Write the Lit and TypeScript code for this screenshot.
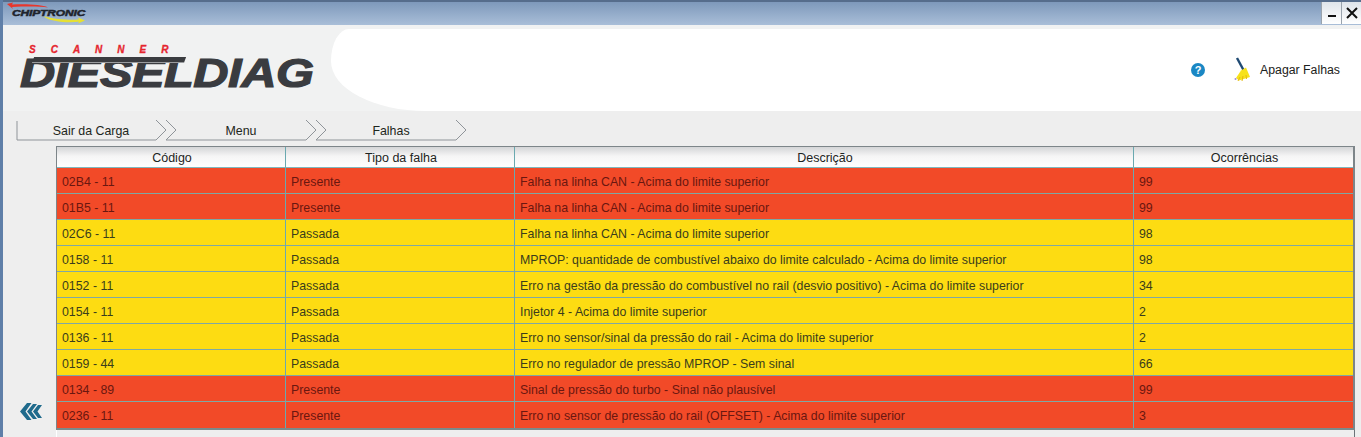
import { LitElement, html, css, svg } from "lit";
import { customElement } from "lit/decorators.js";

type Row = { code: string; type: "Presente" | "Passada"; desc: string; n: string };

const ROWS: Row[] = [
  { code: "02B4 - 11", type: "Presente", desc: "Falha na linha CAN - Acima do limite superior", n: "99" },
  { code: "01B5 - 11", type: "Presente", desc: "Falha na linha CAN - Acima do limite superior", n: "99" },
  { code: "02C6 - 11", type: "Passada", desc: "Falha na linha CAN - Acima do limite superior", n: "98" },
  { code: "0158 - 11", type: "Passada", desc: "MPROP: quantidade de combustível abaixo do limite calculado - Acima do limite superior", n: "98" },
  { code: "0152 - 11", type: "Passada", desc: "Erro na gestão da pressão do combustível no rail (desvio positivo) - Acima do limite superior", n: "34" },
  { code: "0154 - 11", type: "Passada", desc: "Injetor 4 - Acima do limite superior", n: "2" },
  { code: "0136 - 11", type: "Passada", desc: "Erro no sensor/sinal da pressão do rail - Acima do limite superior", n: "2" },
  { code: "0159 - 44", type: "Passada", desc: "Erro no regulador de pressão MPROP - Sem sinal", n: "66" },
  { code: "0134 - 89", type: "Presente", desc: "Sinal de pressão do turbo - Sinal não plausível", n: "99" },
  { code: "0236 - 11", type: "Presente", desc: "Erro no sensor de pressão do rail (OFFSET) - Acima do limite superior", n: "3" },
];

const crumbShape = (first: boolean, last: boolean) => svg`
  ${first ? svg`<path d="M1 1V20H140" />` : svg`<path d="M0 20H140" />`}
  <path d="M140 20L150 10L140 0" />
  ${last ? "" : svg`<path d="M150 20L160 10L150 0" />`}
`;

@customElement("app-root")
export class AppRoot extends LitElement {
  static styles = css`
    :host {
      display: block;
      width: 1361px;
      height: 437px;
      overflow: hidden;
      font-family: "Liberation Sans", Arial, sans-serif;
      background: #eeeeee;
    }
    .frame {
      height: 437px;
      display: flex;
      flex-direction: column;
      border-left: 3px solid #5f7fa8;
      box-sizing: border-box;
      overflow: hidden;
    }
    .titlebar {
      height: 25px;
      flex: none;
      display: flex;
      justify-content: space-between;
      margin-left: -3px;
      box-sizing: border-box;
      border-top: 2px solid #566d8c;
      background: linear-gradient(#7e99bb, #a9bed8);
    }
    .chip {
      position: relative;
      width: 90px;
      height: 23px;
      margin-left: 6px;
    }
    .chip svg {
      position: absolute;
      inset: 0;
    }
    .chip span {
      position: absolute;
      left: 6px;
      top: 6px;
      font: italic 900 9.5px/10px "Liberation Sans", sans-serif;
      letter-spacing: -0.1px;
      color: #20242c;
      -webkit-text-stroke: 0.5px #20242c;
      transform: scaleX(1.26);
      transform-origin: left;
    }
    .winbtns {
      display: flex;
      height: 23px;
    }
    .winbtn {
      width: 20px;
      height: 22px;
      background: linear-gradient(#dfe4ea, #ffffff);
      border-left: 1px solid #9aa3ad;
      display: flex;
      align-items: center;
      justify-content: center;
      box-sizing: border-box;
    }
    .winbtn svg {
      display: block;
    }
    .head {
      flex: none;
      height: 86px;
      display: flex;
      padding-top: 4px;
      box-sizing: border-box;
      background: #f1f2f2;
    }
    .logo {
      position: relative;
      width: 328px;
      flex: none;
      padding: 16px 0 0 17px;
      box-sizing: border-box;
    }
    .scanner {
      font: italic 700 10px/10px "Liberation Sans", sans-serif;
      letter-spacing: 15px;
      color: #e5262f;
      margin-left: 9px;
      -webkit-text-stroke: 0.3px #e5262f;
    }
    .diesel {
      font: italic 700 40px/31px "Liberation Sans", sans-serif;
      color: #3a3c40;
      -webkit-text-stroke: 1.2px #3a3c40;
      transform: scaleX(1.22);
      transform-origin: left;
      white-space: nowrap;
      margin-top: 3px;
      letter-spacing: -0.4px;
    }
    .band {
      position: absolute;
      left: 30px;
      top: 28px;
      width: 152px;
      height: 5px;
      background: #3a3c40;
      border-bottom: 1px solid #9a9c9f;
      transform: skewX(-20deg);
    }
    .blob {
      flex: 1;
      background: #ffffff;
      border-radius: 18px 0 0 95px / 32px 0 0 50px;
      display: flex;
      align-items: center;
      justify-content: flex-end;
      padding-right: 21px;
      padding-bottom: 1px;
    }
    .help {
      width: 14px;
      height: 14px;
      border-radius: 50%;
      background: #1a87c4;
      color: #fff;
      font: 700 11px/14px "Liberation Sans", sans-serif;
      text-align: center;
      margin-right: 29px;
    }
    .broom {
      margin-right: 6px;
      display: block;
    }
    .erase {
      font-size: 12.3px;
      color: #1c2220;
    }
    .crumbs {
      flex: none;
      height: 35px;
      display: flex;
      padding: 9px 0 0 13px;
      box-sizing: border-box;
      background: #eeeeee;
    }
    .crumb {
      display: grid;
      width: 150px;
      height: 21px;
    }
    .crumb > * {
      grid-area: 1 / 1;
    }
    .crumb svg {
      display: block;
      width: 162px;
      height: 21px;
      fill: none;
      stroke: #8f9499;
      stroke-width: 1;
    }
    .crumb span {
      font-size: 12.4px;
      color: #1d2620;
      line-height: 23px;
      text-align: center;
      padding-right: 12px;
    }
    .body {
      flex: 1;
      display: flex;
      min-height: 0;
    }
    .side {
      width: 53px;
      flex: none;
      display: flex;
      align-items: flex-end;
      padding: 0 0 15px 16px;
      box-sizing: border-box;
    }
    .tablewrap {
      width: 1299px;
      flex: none;
      border-left: 1px solid #ffffff;
      border-right: 1px solid #6c7378;
      box-sizing: border-box;
    }
    .grid {
      display: grid;
      grid-template-columns: 228px 229px 619px 1fr;
      border: 1px solid #7d8589;
      border-bottom: 2px solid #7b8a8a;
      border-right: 2px solid #7d8589;
      margin-left: -1px;
      margin-right: -1px;
      box-sizing: border-box;
    }
    .th {
      height: 21px;
      line-height: 22px;
      font-size: 12.5px;
      padding-left: 2px;
      color: #1c2422;
      text-align: center;
      background: linear-gradient(#d4d5d7, #f5f5f5 45%, #ffffff);
      border-left: 1px solid #6aa9b0;
      border-bottom: 1px solid #7fb8be;
      box-sizing: border-box;
    }
    .td {
      height: 26px;
      line-height: 28px;
      font-size: 12.35px;
      padding-left: 5px;
      box-sizing: border-box;
      border-left: 1px solid #6aa9b0;
      border-bottom: 1px solid #7fa8a4;
      white-space: nowrap;
      overflow: hidden;
    }
    .th.first,
    .td.first {
      border-left: none;
    }
    .last {
      border-bottom: none;
    }
    .red {
      background: #f24a28;
      color: #6a1710;
    }
    .yellow {
      background: #fddc12;
      color: #3a3d1c;
    }
  `;

  render() {
    return html`
      <div class="frame">
        <div class="titlebar">
          <div class="chip">
            <svg width="90" height="23" viewBox="0 0 90 23">
              <path d="M1 2L7 0.5L6 2.5C22 2 36 2.5 42 5.5C34 4.3 20 4.3 6 5L7 7Z" fill="#e8362c" />
              <path d="M37 14C50 18 66 18 73 17.5L72 15.5L79 18.5L72 21.5L73 19.8C62 21 44 20 37 14Z" fill="#e6e033" />
            </svg>
            <span>CHIPTRONIC</span>
          </div>
          <div class="winbtns">
            <div class="winbtn">
              <svg width="10" height="10" viewBox="0 0 10 10"><rect x="1" y="7" width="8" height="2" fill="#111" /></svg>
            </div>
            <div class="winbtn">
              <svg width="12" height="12" viewBox="0 0 12 12"><path d="M1 1L11 11M11 1L1 11" stroke="#111" stroke-width="2" /></svg>
            </div>
          </div>
        </div>
        <div class="head">
          <div class="logo">
            <div class="scanner">SCANNER</div>
            <div class="diesel">DIESELDIAG</div>
            <div class="band"></div>
          </div>
          <div class="blob">
            <div class="help">?</div>
            <svg class="broom" width="20" height="25" viewBox="0 0 20 25">
              <path d="M3 1L9.5 13" stroke="#1f4a73" stroke-width="2.4" />
              <path d="M7 13.5L12 10.5L16 20L5 23.5L2 21Z" fill="#f7e21a" />
              <path d="M6 20L4 24M9 19L8 24M12 18L12.5 22" stroke="#e3b90f" stroke-width="1" />
              <circle cx="1.5" cy="22" r="1" fill="#a58ad6" />
            </svg>
            <span class="erase">Apagar Falhas</span>
          </div>
        </div>
        <div class="crumbs">
          ${["Sair da Carga", "Menu", "Falhas"].map(
            (c, i) => html`<div class="crumb">
              <svg viewBox="0 0 162 21">${crumbShape(i === 0, i === 2)}</svg>
              <span>${c}</span>
            </div>`
          )}
        </div>
        <div class="body">
          <div class="side">
            <svg width="24" height="20" viewBox="0 0 24 20">
              <path d="M8 1L1 9.5L8 18H12.5L6.5 9.5L12.5 1Z" fill="#1f6a8c" />
              <path d="M14 2L8 9.5L14 17H18L12.5 9.5L18 2Z" fill="#1f6a8c" />
              <path d="M19 3L14 9.5L19 16H23L18.5 9.5L23 3Z" fill="#1f6a8c" />
            </svg>
          </div>
          <div class="tablewrap">
            <div class="grid">
              <div class="th first">Código</div>
              <div class="th">Tipo da falha</div>
              <div class="th">Descrição</div>
              <div class="th">Ocorrências</div>
              ${ROWS.map((r, i) => {
                const tone = r.type === "Presente" ? "red" : "yellow";
                const last = i === ROWS.length - 1 ? "last" : "";
                return html`
                  <div class="td first ${tone} ${last}">${r.code}</div>
                  <div class="td ${tone} ${last}">${r.type}</div>
                  <div class="td ${tone} ${last}">${r.desc}</div>
                  <div class="td ${tone} ${last}">${r.n}</div>
                `;
              })}
            </div>
          </div>
        </div>
      </div>
    `;
  }
}
